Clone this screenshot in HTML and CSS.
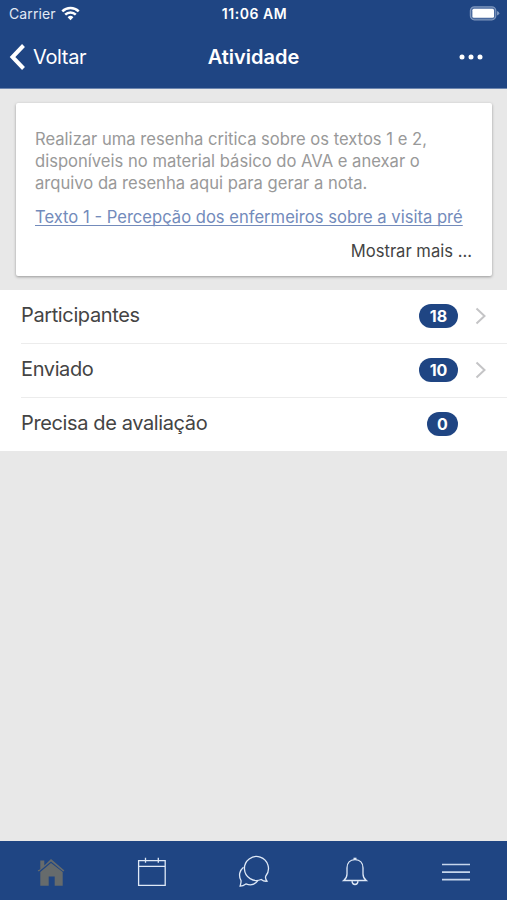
FILE: index.html
```html
<!DOCTYPE html>
<html lang="pt-BR">
<head>
    <meta charset="UTF-8">
    <meta name="viewport" content="width=device-width, initial-scale=1.0">
    <title>Atividade</title>
    <link rel="stylesheet" href="styles.css">
</head>
<body>
    <header class="header">
        <!-- Status bar -->
        <div class="status-bar">
            <div class="carrier">
                <span>Carrier</span>
                <svg width="19" height="15" viewBox="0 0 19 15" fill="none" stroke="#fff" stroke-width="2.5">
                    <path d="M1.3 5.3a11.6 11.6 0 0 1 16.4 0"/>
                    <path d="M4.2 8.6a7.5 7.5 0 0 1 10.6 0"/>
                    <path d="M9.5 14.3L6.6 11.3a4.1 4.1 0 0 1 5.8 0z" fill="#fff" stroke="none"/>
                </svg>
            </div>
            <span class="time">11:06 AM</span>
            <svg class="battery" width="31" height="15" viewBox="0 0 31 15">
                <rect x="1.4" y=".8" width="25.4" height="13" rx="4" fill="#4a6a9f" stroke="#7e96bd" stroke-width="1.2"/>
                <rect x="3.4" y="2.8" width="21.6" height="9" rx="1.5" fill="#fff"/>
                <path d="M28 5q2.3 1 2.3 2.3T28 9.6z" fill="#7e96bd"/>
            </svg>
        </div>

        <!-- Navigation bar -->
        <div class="nav-bar">
            <a class="back">
                <svg width="18" height="28" viewBox="0 0 18 28" fill="none" stroke="#fff" stroke-width="4">
                    <path d="M15.500 2.500L4.500 14l11 11.500"/>
                </svg>
                <span>Voltar</span>
            </a>
            <h1 class="title">Atividade</h1>
            <svg class="more" width="24" height="6" viewBox="0 0 24 6" fill="#fff">
                <circle cx="3" cy="3" r="2.500"/>
                <circle cx="12" cy="3" r="2.500"/>
                <circle cx="21" cy="3" r="2.500"/>
            </svg>
        </div>
    </header>

    <main class="content">
        <div class="card">
            <p class="description">
                Realizar uma resenha critica sobre os textos 1 e 2,<br>
                disponíveis no material básico do AVA e anexar o<br>
                arquivo da resenha aqui para gerar a nota.
            </p>
            <a class="text-link">Texto 1 - Percepção dos enfermeiros sobre a visita pré</a>
            <div class="show-more">Mostrar mais ...</div>
        </div>

        <ul class="list">
            <li class="item">
                <div class="item-inner">
                    <span class="label">Participantes</span>
                    <span class="badge">18</span>
                    <svg class="arrow" width="12" height="18" viewBox="0 0 12 18"><path d="M1.5 1.5L9.5 9l-8 7.5"/></svg>
                </div>
            </li>
            <li class="item">
                <div class="item-inner">
                    <span class="label">Enviado</span>
                    <span class="badge">10</span>
                    <svg class="arrow" width="12" height="18" viewBox="0 0 12 18"><path d="M1.5 1.5L9.5 9l-8 7.5"/></svg>
                </div>
            </li>
            <li class="item">
                <div class="item-inner">
                    <span class="label">Precisa de avaliação</span>
                    <span class="badge single">0</span>
                </div>
            </li>
        </ul>
    </main>

    <!-- Bottom tabs -->
    <nav class="tabs">
        <a class="tab">
            <svg width="32" height="32" viewBox="0 0 32 32" fill="#666b6c">
                <path d="M5.3 13.3V4.6h4v4.8L16 2.9l13.4 11.5-1.2 1.2L16 5.4 3.8 15.6l-1.2-1.2z"/>
                <path d="M5.3 16.1L16 7l11.7 9.1v13.6h-8v-9.2h-6v9.2H5.3z"/>
            </svg>
        </a>
        <a class="tab">
            <svg width="32" height="32" viewBox="0 0 32 32" fill="none" stroke="#dfe9f7" stroke-width="1.3">
                <path d="M2.6 4.6h26.6v24.8H2.6zM2.6 10.4h26.6M9.5 1.7v5M22.3 1.7v5"/>
            </svg>
        </a>
        <a class="tab">
            <svg width="34" height="34" viewBox="0 0 34 34" fill="none" stroke="#dfe9f7" stroke-width="1.3">
                <path d="M31 26.2c-2 .2-4.2-.4-5.8-1.7A12 12 0 1 1 29.8 21c-.8 1.8 0 3.5 1.2 5.2z"/>
                <path d="M7.5 12.2c-4 3.2-5.1 8.4-2.6 13 .6 1.5-.2 3.7-.8 5.9 2.2 0 4-.8 5.8-2.2 4.7 2 9 .8 11.9-3.2"/>
            </svg>
        </a>
        <a class="tab">
            <svg width="32" height="32" viewBox="0 0 32 32" fill="none" stroke="#dfe9f7" stroke-width="1.3">
                <path d="M4.7 24.5c2.3-1.7 3.3-3.2 3.3-6.4v-6c0-5 3-8.4 8-8.4s8 3.4 8 8.4v6c0 3.2 1 4.7 3.3 6.4z"/>
                <path d="M13 25.1c.2 2.3 1.2 3.4 3 3.4s2.8-1.1 3-3.4"/>
                <path d="M14.5 2.7h3" stroke-width="2"/>
            </svg>
        </a>
        <a class="tab">
            <svg width="32" height="32" viewBox="0 0 32 32" fill="none" stroke="#c6d6ec" stroke-width="1.7">
                <path d="M2 8.5h28M2 16.2h28M2 23.7h28"/>
            </svg>
        </a>
    </nav>
</body>
</html>
```
FILE: styles.css
```css
* {
    box-sizing: border-box;
}
body {
    margin: 0;
    height: 100vh;
    display: flex;
    flex-direction: column;
    background-color: #e8e8e8;
    color: #444;
    font-family: Inter, "Liberation Sans", sans-serif;
    white-space: nowrap;
    overflow: hidden;
}
svg {
    display: block;
    flex-shrink: 0;
}
.header {
    height: 89px;
    background-color: #1f4583;
    color: #fff;
    border-bottom: 1px solid #6d86af;
}
.status-bar {
    height: 27px;
    display: grid;
    grid-template-columns: 1fr auto 1fr;
    align-items: center;
    padding: 0 7px 0 9px;
    font-size: 14px;
}
.carrier {
    display: flex;
    align-items: center;
    gap: 5px;
    color: #e2e9f4;
    letter-spacing: 0.1px;
}
.time {
    font-weight: 600;
    letter-spacing: 0.55px;
}
.battery {
    justify-self: end;
}
.nav-bar {
    height: 61px;
    display: grid;
    grid-template-columns: 1fr auto 1fr;
    align-items: center;
    padding: 0 8px 2px;
}
.back {
    display: flex;
    align-items: center;
    gap: 7px;
    font-size: 20px;
    letter-spacing: -0.35px;
}
.title {
    margin: 0;
    font-size: 20px;
    font-weight: 600;
}
.more {
    justify-self: end;
    margin-right: 16px;
}
.content {
    flex: 1;
}
.card {
    margin: 14px 15px 14px 16px;
    height: 173px;
    padding: 25px 20px 0 19px;
    background-color: #fff;
    border-radius: 2px;
    box-shadow: 0 1px 3px rgba(0, 0, 0, 0.35);
    font-size: 16.6px;
}
.description {
    margin: 0 0 12px;
    line-height: 22px;
    color: #999;
}
.text-link {
    display: block;
    line-height: 22px;
    color: #738bbb;
    text-decoration: underline;
    text-decoration-thickness: 1px;
    text-underline-offset: 2px;
    text-decoration-skip-ink: none;
}
.show-more {
    margin-top: 12px;
    line-height: 22px;
    text-align: right;
}
.list {
    margin: 0;
    padding: 0;
    list-style: none;
    background-color: #fff;
}
.item {
    padding-left: 21px;
}
.item-inner {
    height: 54px;
    display: flex;
    align-items: center;
    padding: 0 20px 2px 0;
    border-bottom: 1px solid #ececec;
}
.item:last-child .item-inner {
    height: 53px;
    padding-right: 49px;
    border-bottom: none;
}
.label {
    flex: 1;
    padding-bottom: 2px;
    font-size: 20px;
    letter-spacing: -0.38px;
}
.badge {
    width: 39px;
    height: 24px;
    border-radius: 12px;
    background-color: #1f4583;
    color: #fff;
    font-size: 16px;
    font-weight: 700;
    line-height: 24px;
    text-align: center;
}
.badge.single {
    width: 31px;
}
.arrow {
    margin-left: 17px;
    fill: none;
    stroke: #c4c4c6;
    stroke-width: 2;
}
.tabs {
    height: 59px;
    display: grid;
    grid-template-columns: repeat(5, 1fr);
    place-items: center;
    padding-top: 3px;
    background-color: #1f4583;
}
```
